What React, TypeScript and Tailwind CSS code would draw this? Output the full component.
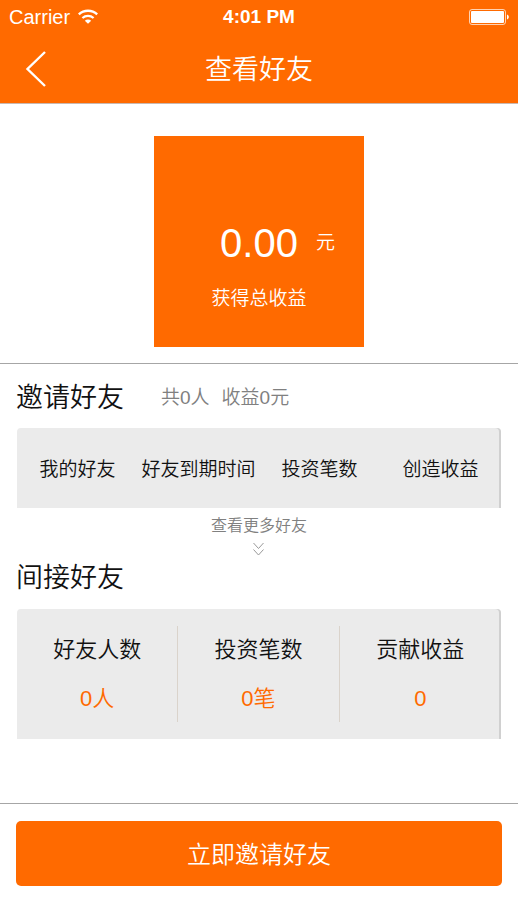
import type { ReactNode } from "react";

interface Stat {
  label: string;
  value: string;
}

const friendColumns = ["我的好友", "好友到期时间", "投资笔数", "创造收益"];

const indirectStats: Stat[] = [
  { label: "好友人数", value: "0人" },
  { label: "投资笔数", value: "0笔" },
  { label: "贡献收益", value: "0" },
];

function WifiIcon() {
  return (
    <svg className="h-4 w-5" viewBox="0 0 20 16" fill="none" aria-hidden="true">
      <path d="M0.8 5.4C6 0.6 14 0.6 19.2 5.4" stroke="white" strokeWidth="2.5" />
      <path d="M4.4 9C7.6 6.2 12.4 6.2 15.6 9" stroke="white" strokeWidth="2.3" />
      <path d="M6.8 11.7C8.6 10.2 11.4 10.2 13.2 11.7L10 14.8Z" fill="white" />
    </svg>
  );
}

function BatteryIcon() {
  return (
    <svg className="h-4 w-10" viewBox="0 0 40 16" fill="none" aria-hidden="true">
      <rect x="0.5" y="0.5" width="36" height="15" rx="2.5" stroke="white" strokeOpacity="0.7" />
      <rect x="2" y="2" width="33" height="12" rx="1" fill="white" />
      <path d="M38 5.5C40.4 6.3 40.4 9.7 38 10.5Z" fill="white" />
    </svg>
  );
}

function StatusBar() {
  return (
    <div className="grid h-[34px] grid-cols-3 items-center px-[9px] text-[19px]">
      <div className="flex items-center gap-2">
        <span className="text-[20px]">Carrier</span>
        <WifiIcon />
      </div>
      <span className="text-center font-bold">4:01 PM</span>
      <div className="flex justify-end">
        <BatteryIcon />
      </div>
    </div>
  );
}

function Card({ children }: { children: ReactNode }) {
  return (
    <div className="mx-[17px] rounded-t bg-[#ebebeb] shadow-[inset_-2px_0_0_#d0d0d0]">
      {children}
    </div>
  );
}

export default function App() {
  return (
    <div className="flex min-h-screen flex-col bg-white font-['Liberation_Sans','Noto_Sans_CJK_SC',sans-serif] text-[#111111]">
      {/* Header */}
      <header className="border-b border-[#c9b8b0] bg-[#ff6a00] text-white">
        <StatusBar />
        <div className="grid h-[69px] grid-cols-[72px_1fr_72px] items-center">
          <button type="button" aria-label="返回" className="flex h-full items-center pl-[25px]">
            <svg className="h-9 w-6" viewBox="0 0 24 36" fill="none" aria-hidden="true">
              <path d="M20 1L2.5 18L20 35" stroke="white" strokeWidth="2.4" />
            </svg>
          </button>
          <h1 className="pt-0.5 text-center text-[27px] leading-8 font-[350]">查看好友</h1>
        </div>
      </header>

      <main className="flex-1">
        {/* Total income */}
        <section className="flex justify-center border-b border-[#a6a6a6] pt-8 pb-4">
          <div className="flex h-[211px] w-[210px] flex-col items-center bg-[#ff6a00] pt-[83px] font-[350] text-white">
            <p className="flex items-center gap-[18px] pl-[37px]">
              <span className="text-[40px] leading-12">0.00</span>
              <span className="text-[19px] leading-12">元</span>
            </p>
            <p className="mt-5 text-[19px] leading-6">获得总收益</p>
          </div>
        </section>

        {/* Invited friends */}
        <section>
          <div className="flex h-16 items-center gap-[37px] pt-1 pl-4">
            <h2 className="text-[27px] leading-8 font-[350]">邀请好友</h2>
            <p className="flex gap-3 text-[19px] leading-6 font-[350] text-[#808080]">
              <span>共0人</span>
              <span>收益0元</span>
            </p>
          </div>
          <Card>
            <table className="h-20 w-full table-fixed">
              <thead>
                <tr>
                  {friendColumns.map((column) => (
                    <th
                      key={column}
                      scope="col"
                      className="pt-1 text-center text-[19px] leading-6 font-[350] whitespace-nowrap"
                    >
                      {column}
                    </th>
                  ))}
                </tr>
              </thead>
            </table>
          </Card>
          <button
            type="button"
            className="mx-auto flex flex-col items-center gap-1 pt-1.5 text-[16px] leading-6 font-[350] text-[#808080]"
          >
            查看更多好友
            <svg className="h-4 w-3" viewBox="0 0 12 16" fill="none" aria-hidden="true">
              <path d="M0.5 1L5.5 6.5L10.5 1M0.5 7.5L5.5 13L10.5 7.5" stroke="#999999" />
            </svg>
          </button>
        </section>

        {/* Indirect friends */}
        <section>
          <h2 className="mb-[15px] pt-1 pl-4 text-[27px] leading-8 font-[350]">间接好友</h2>
          <Card>
            <dl className="grid grid-cols-3 divide-x divide-[#dad3cb] py-[17px] text-center text-[22px] leading-8 font-[350]">
              {indirectStats.map((stat) => (
                <div key={stat.label} className="pt-2 pb-[7px]">
                  <dt>{stat.label}</dt>
                  <dd className="mt-[17px] text-[#ff6a00]">{stat.value}</dd>
                </div>
              ))}
            </dl>
          </Card>
        </section>
      </main>

      {/* Invite action */}
      <footer className="border-t border-[#a6a6a6] px-4 pt-[17px] pb-[34px]">
        <button
          type="button"
          className="h-[65px] w-full rounded-[5px] bg-[#ff6a00] pt-0.5 text-[24px] font-[350] text-white"
        >
          立即邀请好友
        </button>
      </footer>
    </div>
  );
}
